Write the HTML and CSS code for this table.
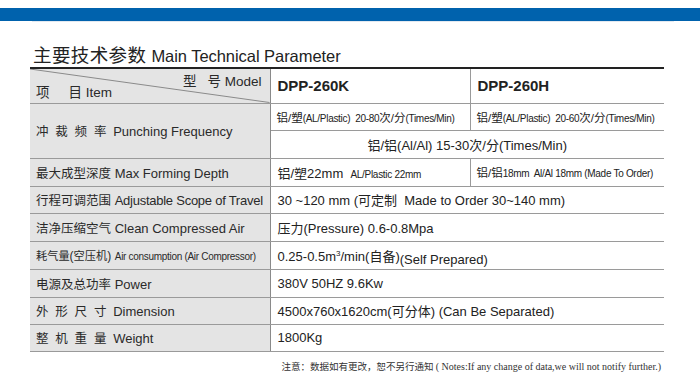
FILE: index.html
```html
<!DOCTYPE html>
<html lang="zh-CN">
<head>
<meta charset="utf-8">
<title>Main Technical Parameter</title>
<link rel="stylesheet" href="styles.css">
</head>
<body>
<div class="topbar"></div>
<div class="topshade"></div>
<main class="sheet">
  <h1 class="title"><span class="zh">主要技术参数</span> <span class="en">Main Technical Parameter</span></h1>
  <table class="spec">
    <colgroup><col class="c1"><col class="c2"><col class="c3"></colgroup>
    <tr class="r-head">
      <th class="corner">
        <svg class="diag" viewBox="0 0 240 34" preserveAspectRatio="none"><line x1="0" y1="0" x2="240" y2="34"/></svg>
        <span class="model">型<span class="gap-m"></span>号 <span class="en">Model</span></span>
        <span class="item">项<span class="gap-i"></span>目 <span class="en">Item</span></span>
      </th>
      <td class="model-name split">DPP-260K</td>
      <td class="model-name">DPP-260H</td>
    </tr>
    <tr class="r-a">
      <th rowspan="2"><span class="zh wide">冲裁频率</span>Punching Frequency</th>
      <td class="small split">铝/塑<span class="nar">(AL/Plastic)&nbsp; 20-80</span>次/分<span class="nar">(Times/Min)</span></td>
      <td class="small">铝/塑<span class="nar">(AL/Plastic)&nbsp; 20-60</span>次/分<span class="nar">(Times/Min)</span></td>
    </tr>
    <tr class="r-b">
      <td colspan="2" class="center">铝/铝(Al/Al) 15-30次/分(Times/Min)</td>
    </tr>
    <tr class="r-c">
      <th><span class="zh">最大成型深度</span> Max Forming Depth</th>
      <td class="split">铝/塑22mm&nbsp; <span class="nar">AL/Plastic 22mm</span></td>
      <td class="small">铝/铝<span class="nar">18mm&nbsp; Al/Al 18mm (Made To Order)</span></td>
    </tr>
    <tr class="r-d">
      <th><span class="zh">行程可调范围</span> <span class="tight">Adjustable Scope of Travel</span></th>
      <td colspan="2">30 ~120 mm (可定制&nbsp; Made to Order 30~140 mm)</td>
    </tr>
    <tr class="r-e">
      <th><span class="zh">洁净压缩空气</span> Clean Compressed Air</th>
      <td colspan="2">压力(Pressure) 0.6-0.8Mpa</td>
    </tr>
    <tr class="r-f">
      <th><span class="zh-s">耗气量</span><span class="lp">(</span><span class="zh-s">空压机</span><span class="lp">)</span> <span class="nar">Air consumption (Air Compressor)</span></th>
      <td colspan="2">0.25-0.5m<sup class="sup">3</sup>/min(自备)<span class="sub">(Self Prepared)</span></td>
    </tr>
    <tr class="r-g">
      <th><span class="zh">电源及总功率</span> Power</th>
      <td colspan="2">380V 50HZ 9.6Kw</td>
    </tr>
    <tr class="r-h">
      <th><span class="zh wide">外形尺寸</span>Dimension</th>
      <td colspan="2">4500x760x1620cm(可分体) (Can Be Separated)</td>
    </tr>
    <tr class="r-i">
      <th><span class="zh wide">整机重量</span>Weight</th>
      <td colspan="2">1800Kg</td>
    </tr>
  </table>
  <p class="note">注意：数据如有更改，恕不另行通知 <span class="note-en">( Notes:If any change of data,we will not notify further.)</span></p>
</main>
</body>
</html>
```

FILE: styles.css
```css
html, body {
  margin: 0;
  padding: 0;
  background: #ffffff;
}

body {
  font-family: "Liberation Sans", "Noto Sans CJK SC", sans-serif;
  color: #222;
}

.topbar {
  margin-top: 8px;
  height: 13px;
  background: #0062ad;
}

.topshade {
  height: 1px;
  margin: 0 26px 0 32px;
  background: #e3e9f0;
}

.sheet {
  padding: 0 36px 0 30px;
}

.title {
  margin: 20px 0 0 0;
  padding-left: 3px;
  height: 25px;
  line-height: 24px;
  font-weight: normal;
  font-size: 18px;
  color: #222;
  border-bottom: 2px solid #222;
  white-space: nowrap;
}

.title .zh {
  font-size: 18.5px;
  letter-spacing: 0.4px;
  font-family: "Noto Sans CJK SC", sans-serif;
}

.title .en {
  font-size: 16.5px;
  letter-spacing: -0.05px;
}

.spec {
  width: 634px;
  border-collapse: collapse;
  table-layout: fixed;
  font-size: 13px;
}

.c1 { width: 240px; }
.c2 { width: 200px; }
.c3 { width: 194px; }

.spec th,
.spec td {
  padding: 0 0 0 7px;
  border-bottom: 1px solid #9a9a9a;
  text-align: left;
  white-space: nowrap;
  box-sizing: border-box;
  overflow: hidden;
}

.spec th {
  font-weight: normal;
  background: #e4e4e4;
  border-right: 1px solid #8a8a8a;
  padding-left: 6px;
  color: #2a2a2a;
}

.spec th .zh {
  font-size: 12.5px;
}

.spec th .zh-s {
  font-size: 11.2px;
}

.spec th .wide {
  letter-spacing: 6.8px;
}

.lp {
  font-family: "Liberation Sans", sans-serif;
  font-size: 12px;
}

.spec td { color: #222; }

.split { border-right: 1px solid #9a9a9a; }

.r-head th, .r-head td { height: 34px; }
.r-a td, .r-a th { height: 27px; }
.r-b td { height: 28px; }
.r-c th, .r-c td { height: 28px; }
.r-d th, .r-d td { height: 27px; }
.r-e th, .r-e td { height: 28px; }
.r-f th, .r-f td { height: 28px; }
.r-g th, .r-g td { height: 28px; }
.r-h th, .r-h td { height: 27px; }
.r-i th, .r-i td { height: 27px; }

.corner {
  position: relative;
  vertical-align: top;
}

.diag {
  position: absolute;
  left: 0;
  top: 0;
  width: 100%;
  height: 100%;
}

.diag line {
  stroke: #8a8a8a;
  stroke-width: 1;
  vector-effect: non-scaling-stroke;
}

.corner .model {
  position: absolute;
  right: 8px;
  top: 1px;
  font-size: 13.5px;
}

.corner .item {
  position: absolute;
  left: 6px;
  bottom: 2px;
  font-size: 13.5px;
}

.gap-m {
  display: inline-block;
  width: 11px;
}

.gap-i {
  display: inline-block;
  width: 19px;
}

.corner .en { font-family: "Liberation Sans", sans-serif; }

.model-name {
  font-weight: bold;
  font-size: 15px;
  padding-top: 2px;
}

.small {
  font-size: 11.5px;
  padding-left: 6px !important;
}

.nar {
  font-size: 10px;
  letter-spacing: -0.3px;
}

.tight {
  letter-spacing: -0.25px;
}

.center {
  text-align: center !important;
  padding-left: 0 !important;
  font-size: 13px;
}

.sup {
  font-size: 8px;
  vertical-align: 5px;
  line-height: 0;
}

.sub {
  position: relative;
  top: 3px;
  font-size: 13px;
}

.note {
  margin: 8px 3px 0 0;
  text-align: right;
  font-family: "Liberation Serif", "Noto Sans CJK SC", serif;
  font-size: 9.5px;
  line-height: 14px;
  color: #333;
  white-space: nowrap;
}

.note-en {
  font-size: 10px;
}
```
